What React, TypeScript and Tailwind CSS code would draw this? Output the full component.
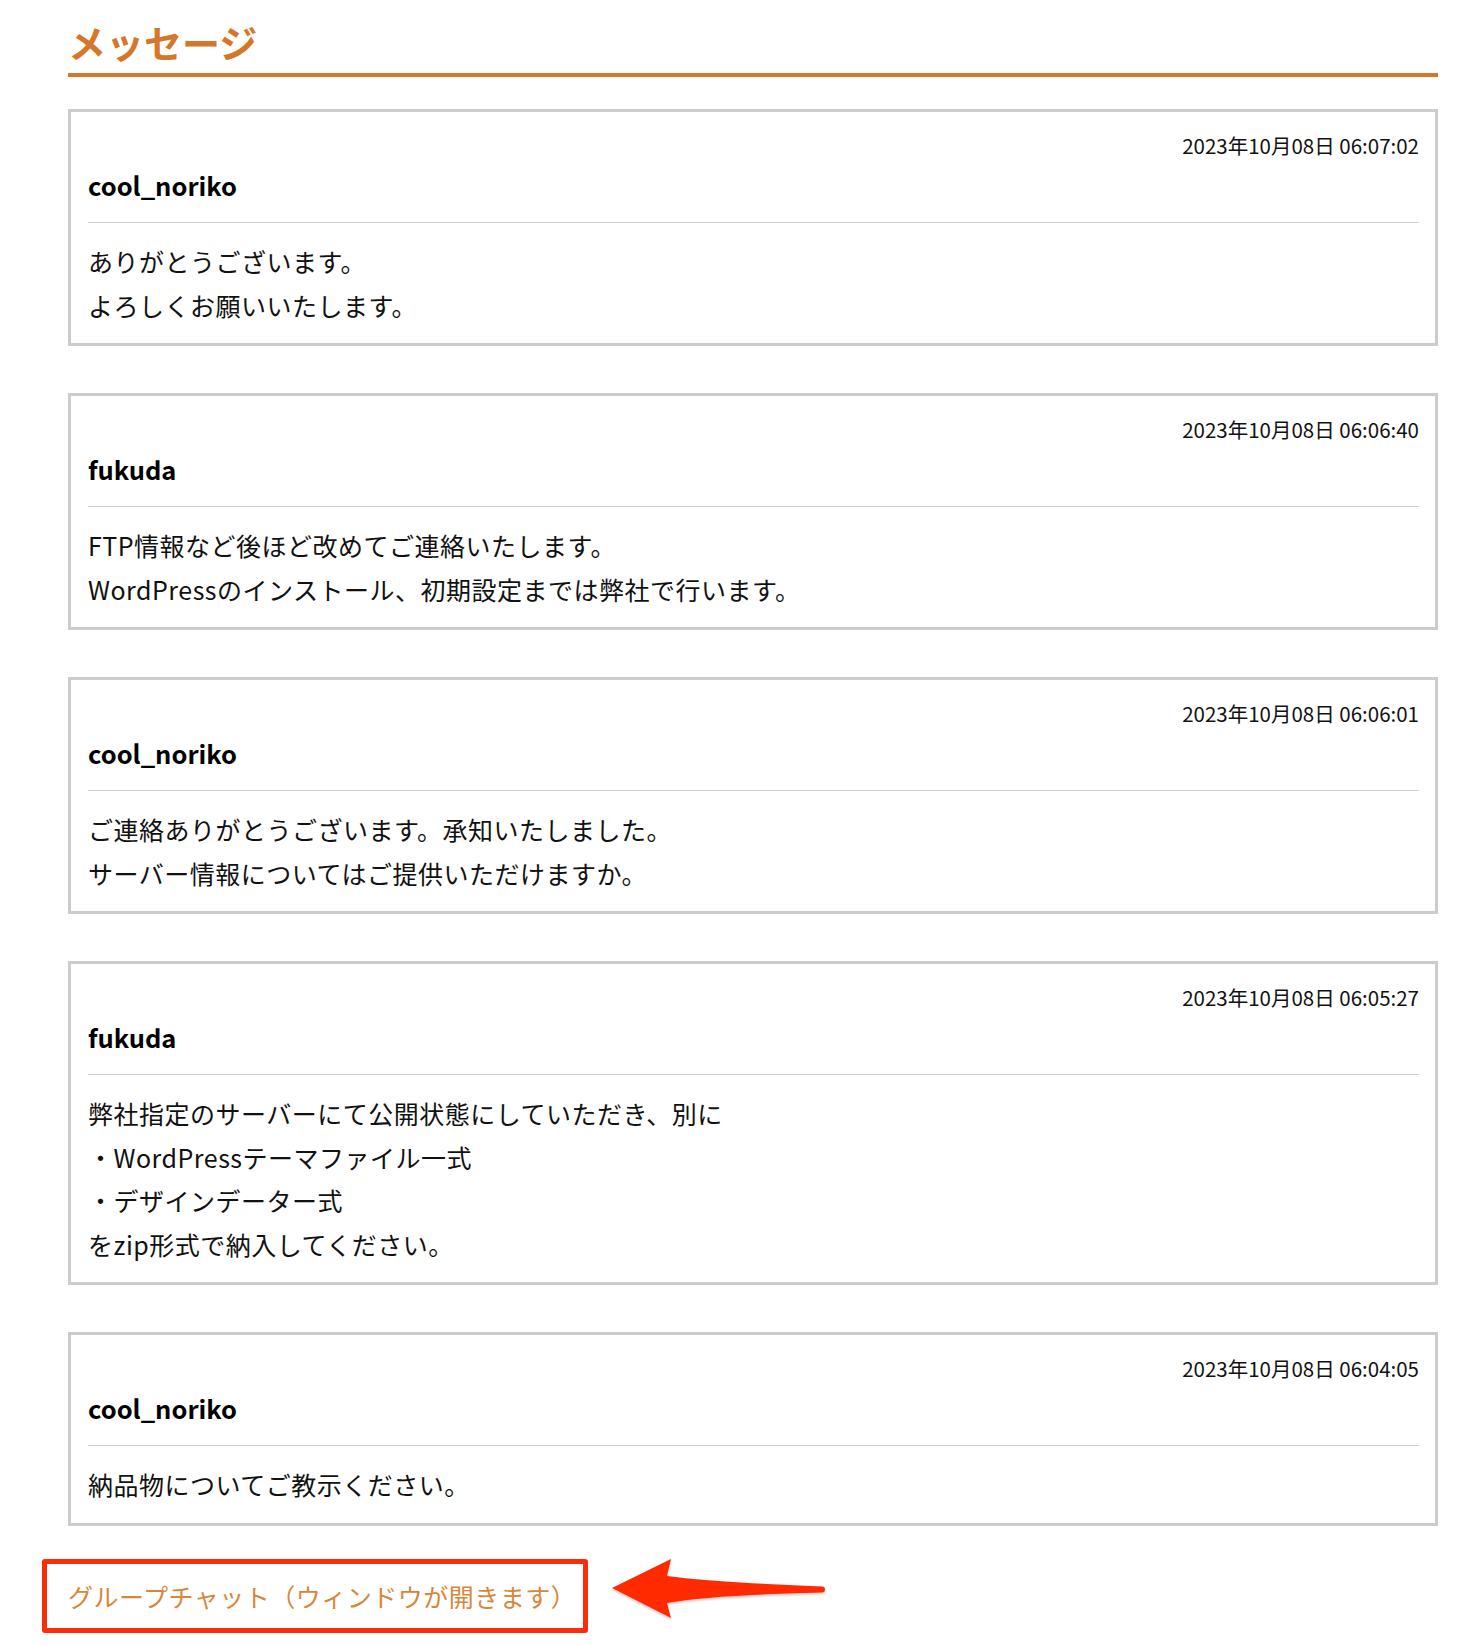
import React from "react";

type Msg = { user: string; time: string; lines: string[] };

const messages: Msg[] = [
  {
    user: "cool_noriko",
    time: "2023年10月08日 06:07:02",
    lines: ["ありがとうございます。", "よろしくお願いいたします。"],
  },
  {
    user: "fukuda",
    time: "2023年10月08日 06:06:40",
    lines: [
      "FTP情報など後ほど改めてご連絡いたします。",
      "WordPressのインストール、初期設定までは弊社で行います。",
    ],
  },
  {
    user: "cool_noriko",
    time: "2023年10月08日 06:06:01",
    lines: [
      "ご連絡ありがとうございます。承知いたしました。",
      "サーバー情報についてはご提供いただけますか。",
    ],
  },
  {
    user: "fukuda",
    time: "2023年10月08日 06:05:27",
    lines: [
      "弊社指定のサーバーにて公開状態にしていただき、別に",
      "・WordPressテーマファイル一式",
      "・デザインデーター式",
      "をzip形式で納入してください。",
    ],
  },
  {
    user: "cool_noriko",
    time: "2023年10月08日 06:04:05",
    lines: ["納品物についてご教示ください。"],
  },
];

function MessageBox({ m }: { m: Msg }) {
  return (
    <div className="border-[3px] border-[#cccccc] bg-white pl-[17px] pr-4 pt-[18px] pb-[16px]">
      <div className="text-right text-[20.5px] leading-[30px] text-[#111]">{m.time}</div>
      <div className="mt-[7px] border-b border-[#d0d0d0] pb-[19px] text-[25.5px] font-bold leading-[36px] text-black">
        {m.user}
      </div>
      <div className="mt-[17px] text-[25px] leading-[43.5px] tracking-[0.5px] text-[#111]">
        {m.lines.map((l, i) => (
          <div key={i}>{l}</div>
        ))}
      </div>
    </div>
  );
}

export default function App() {
  return (
    <div
      className="min-h-[1646px] w-[1464px] bg-white"
      style={{ fontFamily: '"Noto Sans CJK JP", "Noto Sans", sans-serif' }}
    >
      <div className="ml-[68px] w-[1370px] pt-[18px] pb-[31px]">
        <h2 className="border-b-4 border-[#d5772a] pb-[7px] text-[38px] font-bold leading-[48px] text-[#d5772a]">
          メッセージ
        </h2>
        <div className="mt-[32px] flex flex-col gap-[47px]">
          {messages.map((m, i) => (
            <MessageBox key={i} m={m} />
          ))}
        </div>
        <div className="relative mt-[52px] h-[36px]">
          <a className="text-[25px] leading-[36px] tracking-[0.5px] text-[#d8873a]" href="#">
            グループチャット（ウィンドウが開きます）
          </a>
          <div className="pointer-events-none absolute left-[-26px] top-[-19px] h-[74px] w-[546px] rounded-[3px] border-[5px] border-[#fb2c0a]" />
          <svg
            className="pointer-events-none absolute left-[532px] top-[-27px]"
            width="240"
            height="80"
            viewBox="0 0 240 80"
          >
            <defs>
              <filter id="sh" x="-10%" y="-20%" width="120%" height="150%">
                <feDropShadow dx="0" dy="1.5" stdDeviation="1.2" floodColor="#000" floodOpacity="0.25" />
              </filter>
            </defs>
            <path
              d="M12 37 L71 8 L67 25 Q110 31 222 35.5 A3 3 0 0 1 222 41.5 Q110 44 67 52 L71 67 Z"
              fill="#ff2a00"
              filter="url(#sh)"
            />
          </svg>
        </div>
      </div>
    </div>
  );
}
